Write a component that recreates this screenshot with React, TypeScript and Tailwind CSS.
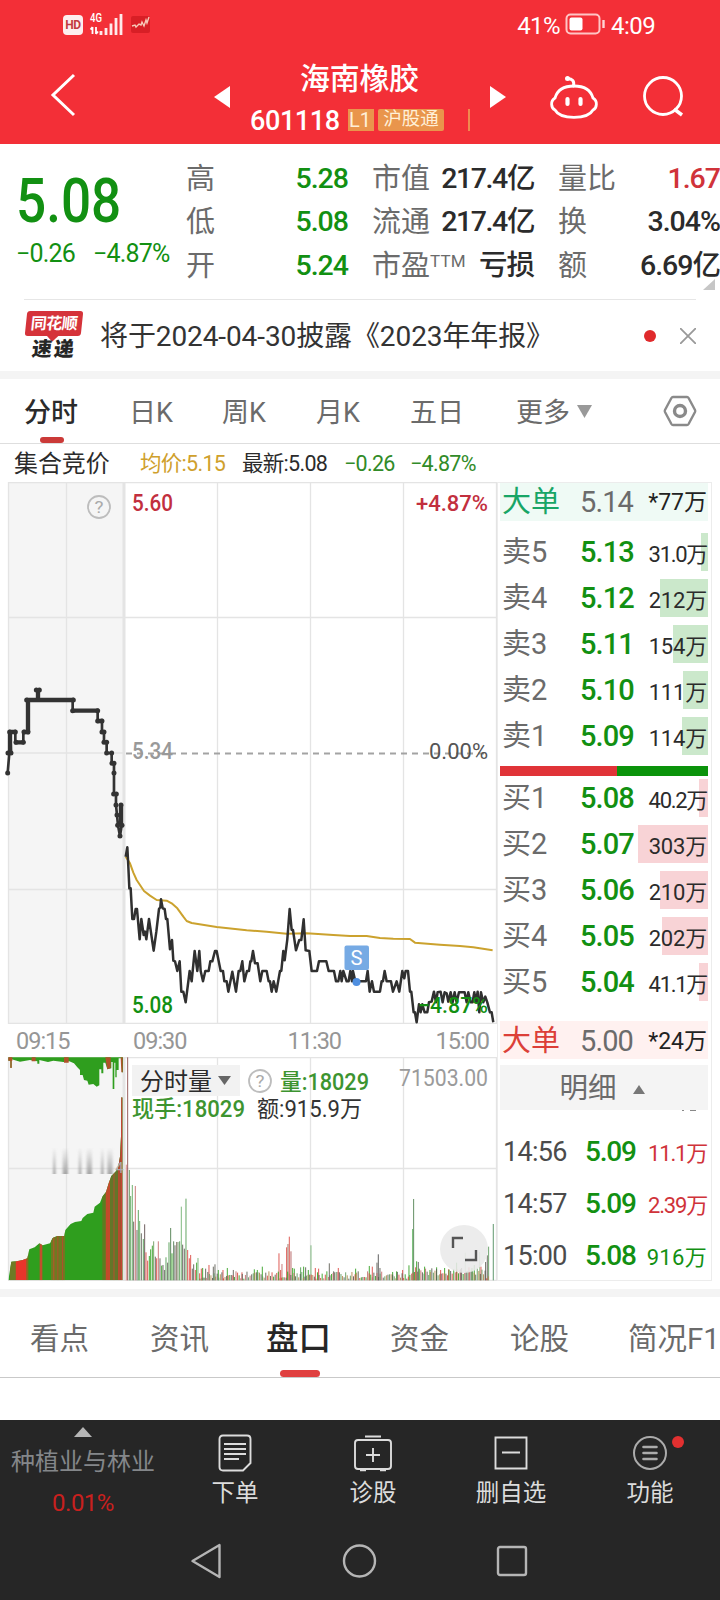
import React from "react";

type Bar = [x: number, top: number, color: string];

const G = "#2f9e1e";
const R = "#d9453f";
const K = "#5b5b52";

const quotes = [
  [["高", "5.28", "g"], ["市值", "217.4亿", "k"], ["量比", "1.67", "r"]],
  [["低", "5.08", "g"], ["流通", "217.4亿", "k"], ["换", "3.04%", "k"]],
  [["开", "5.24", "g"], ["市盈", "亏损", "k"], ["额", "6.69亿", "k"]],
];

const sells = [
  ["卖5", "5.13", "31.0万", 7],
  ["卖4", "5.12", "212万", 48],
  ["卖3", "5.11", "154万", 35],
  ["卖2", "5.10", "111万", 25],
  ["卖1", "5.09", "114万", 26],
] as const;

const buys = [
  ["买1", "5.08", "40.2万", 9],
  ["买2", "5.07", "303万", 70],
  ["买3", "5.06", "210万", 48],
  ["买4", "5.05", "202万", 46],
  ["买5", "5.04", "41.1万", 9],
] as const;

const trades = [
  ["14:56", "5.09", "11.1万", "r"],
  ["14:57", "5.09", "2.39万", "r"],
  ["15:00", "5.08", "916万", "g"],
] as const;

const tone: Record<string, string> = {
  g: "text-[#129012]",
  r: "text-[#d0333a]",
  k: "text-[#2b2b2b]",
};

const priceLine =
  "17,110 22,82 25,140 28,205 32,205 37,297 42,297 47,267 51,267 59,358 64,297 71,345 75,335 79,358 87,297 101,392 109,335 117,267 121,262 123,238 128,265 134,267 138,297 142,297 150,388 156,360 160,422 165,424 172,453 179,424 184,515 190,515 197,547 209,453 215,484 224,393 232,453 238,393 242,453 249,484 256,453 266,453 271,424 277,424 285,393 290,393 302,453 309,453 313,484 320,484 325,515 337,455 348,515 356,453 361,453 367,424 373,484 381,453 387,453 391,424 394,424 399,393 405,430 413,430 421,484 427,453 440,453 446,484 450,484 455,515 461,484 469,515 480,453 484,453 490,393 494,421 502,358 509,267 515,330 519,330 528,391 538,360 544,360 551,298 557,391 568,393 575,453 591,453 597,424 619,424 626,453 642,453 648,484 655,484 661,453 665,484 670,453 680,484 686,484 691,453 696,484 699,453 706,484 738,484 743,453 749,515 756,484 762,515 780,515 785,484 789,484 794,453 800,484 813,484 819,515 830,484 838,515 847,453 853,475 857,453 864,453 870,515 874,515 881,577 885,577 890,607 897,553 902,577 907,553 914,577 922,577 927,547 935,545 942,515 948,547 953,517 962,515 968,547 974,517 980,520 985,545 992,517 998,547 1004,517 1010,547 1017,517 1034,517 1040,547 1045,517 1052,547 1058,547 1063,517 1068,547 1073,515 1078,577 1083,517 1090,547 1096,530 1102,547 1110,577 1115,577 1120,607";
const avgLine =
  "17,110 30,130 40,158 50,180 72,213 90,227 110,240 140,242 155,250 172,265 190,290 200,303 215,309 290,321 380,331 440,335 500,341 560,340 640,345 690,348 740,348 780,354 820,356 870,357 885,368 960,374 1020,378 1060,382 1118,391";
const auctionLine =
  "23,909 28,849 33,849 31,786 46,786 46,817 70,817 70,786 84,786 84,690 114,690 114,660 114,690 218,690 218,722 293,722 293,753 306,753 306,786 312,786 312,817 320,817 320,849 335,849 335,880 342,880 342,972 348,972 348,1005 351,1035 354,1066 360,1098 365,1066 363,1005";
const auctionDots = [
  [23, 909], [24, 849], [33, 849], [29, 786], [46, 786], [48, 817], [70, 817], [72, 786], [84, 786], [80, 690],
  [220, 690], [109, 660], [118, 660], [218, 722], [293, 722], [293, 753], [306, 753], [306, 786], [312, 786],
  [312, 817], [320, 817], [320, 849], [335, 849], [336, 880], [342, 880], [342, 909], [341, 972], [349, 972],
  [348, 1005], [363, 1005], [351, 1035], [353, 1066], [366, 1066], [360, 1098],
];

const peaks: Bar[] = [
  [379, 374, "#e08080"], [383, 52, "#8a4a4a"], [388, 390, "#4d8c4d"], [392, 468, "#58a058"], [397, 435, "#5fa85f"],
  [401, 545, K], [406, 438, "#c46a6a"], [411, 570, K], [415, 510, "#4f9a4f"], [419, 543, "#5fa85f"], [424, 580, K],
  [430, 597, "#4f9a4f"], [434, 553, "#5b4a4a"], [438, 637, R], [443, 662, R], [448, 648, G], [452, 628, G],
  [457, 617, G], [461, 604, "#6a9a5a"], [466, 650, K], [470, 655, R], [475, 604, "#c46a6a"], [480, 655, K],
  [485, 677, G], [489, 675, K], [494, 690, K], [498, 652, "#4f9a4f"], [503, 668, K], [507, 607, "#4f9a4f"],
  [512, 564, "#4a7a4a"], [516, 640, G], [521, 604, "#4f7a4f"], [525, 616, K], [530, 606, "#7a6a5a"],
  [534, 606, "#6f8a5f"], [539, 604, "#4f9a4f"], [544, 500, "#6fb06f"], [548, 614, K], [553, 626, K],
  [558, 476, "#4f9a4f"], [563, 630, R], [568, 655, R], [572, 645, R], [577, 686, K], [581, 673, K], [586, 690, R],
  [590, 668, G], [594, 654, "#6fb06f"], [599, 700, R], [604, 686, R], [608, 684, G], [617, 686, K], [627, 675, R],
  [640, 680, K], [645, 673, K], [655, 690, G], [669, 690, R], [682, 684, G], [700, 690, K], [726, 697, R],
  [763, 688, G], [772, 690, G],
  [787, 680, G], [837, 640, R], [842, 690, R], [846, 672, "#c46a6a"], [860, 622, R], [864, 612, "#9a6a5a"],
  [868, 590, R], [873, 634, "#b05a5a"], [878, 684, G], [883, 686, G], [902, 682, "#4f9a4f"], [911, 680, G],
  [917, 682, K], [925, 690, G], [933, 616, "#6fb06f"], [946, 684, R], [956, 686, R], [988, 670, K], [1001, 694, K],
  [1015, 684, R], [1067, 686, G], [1108, 678, G], [1117, 680, R], [1131, 668, K], [1135, 643, "#4a4a4a"],
  [1140, 684, K], [1178, 696, G], [1190, 694, G], [1208, 690, R], [1227, 676, G], [1238, 567, "#58b058"],
  [1241, 477, "#4f7f4f"], [1247, 682, R], [1250, 664, G], [1255, 666, K], [1274, 680, G], [1290, 690, G],
  [1310, 682, G], [1322, 690, R], [1334, 684, G], [1346, 688, R], [1370, 668, G], [1382, 688, K], [1396, 638, "#a9c9a0"],
  [1407, 682, R], [1416, 684, G], [1423, 675, G], [1439, 636, "#9fc090"], [1443, 680, R], [1457, 666, K],
  [1462, 646, K], [1466, 620, "#5f9a5f"], [1480, 552, "#4a8a5a"],
];

const noise: Bar[] = Array.from({ length: 185 }, (_, i) => {
  const x = 600 + i * 4.7;
  const h = 5 + ((i * 37 + ((i * i) % 17) * 11) % 23);
  const end = x > 1255 && x < 1460 ? 10 : 0;
  return [x, 721 - h - end, [G, R, K, "#b0884a", "#5f9a5f", K, "#c46a6a"][(i * 5 + (i % 4)) % 7]];
});

const label = { fontFamily: "Roboto, 'Noto Sans CJK SC', sans-serif" };

function ChartText({
  x, y, w, size, fill, weight = 400, children,
}: { x: number; y: number; w: number; size: number; fill: string; weight?: number; children: string }) {
  return (
    <text x={x} y={y} fontSize={size} fill={fill} fontWeight={weight} textLength={w} lengthAdjust="spacingAndGlyphs" style={label}>
      {children}
    </text>
  );
}

function StatusBar() {
  return (
    <div className="flex h-12 items-center pl-[63px] pr-[63px] text-white">
      <div className="mt-px flex h-[20px] w-5 items-center justify-center rounded-[4px] bg-[#fdeeee] text-[12px] font-bold tracking-[-0.5px] text-[#c23a40]">HD</div>
      <svg className="ml-1.5" width="36" height="32" viewBox="0 0 36 32">
        <text x="1" y="14" fontSize="13" fontWeight="500" fill="#fff" textLength="12" lengthAdjust="spacingAndGlyphs" style={label}>4G</text>
        <g stroke="#fff" strokeWidth="2" fill="none">
          <path d="M3.500 26V19M1.500 21.500L3.500 19M7 19v7M9 23.500L7 26" strokeWidth="1.800" />
          <path d="M12 27v-4M17 27v-7M22 27V15.500M27 27V10M32 27V6" strokeWidth="2.800" opacity=".9" />
        </g>
      </svg>
      <svg className="ml-[5px]" width="22" height="20" viewBox="0 0 22 20">
        <rect x="1" y="2" width="19" height="17" rx="2" fill="#d81f26" />
        <path d="M2 12l3-1 1 2 3-3 2 1 1-3 2 4 2-6 1 3 2-6" fill="none" stroke="#f7c9b8" strokeWidth="1.400" />
      </svg>
      <div className="ml-auto pt-[3px] text-[24px] tracking-[-0.6px]">41%</div>
      <svg className="ml-[5px]" width="42" height="24" viewBox="0 0 42 24">
        <rect x="1.500" y="2.500" width="33" height="19" rx="4" fill="none" stroke="#ffc5c5" strokeWidth="2" />
        <rect x="4.500" y="5.500" width="13" height="13" rx="2" fill="#fff" />
        <path d="M38.500 8v8" stroke="#ffd5d5" strokeWidth="2.400" />
      </svg>
      <div className="ml-1 w-[46px] pt-[3px] text-[24px] tracking-[-0.5px]">4:09</div>
    </div>
  );
}

function TitleBar() {
  return (
    <div className="flex h-24 items-center pb-[3px] text-white">
      <svg className="ml-[50px]" width="26" height="44" viewBox="0 0 26 44">
        <path d="M24 2L3 22l21 20" fill="none" stroke="#fff" strokeWidth="3" />
      </svg>
      <svg className="mt-1 ml-[138px]" width="16" height="22" viewBox="0 0 16 22"><path d="M16 0v22L0 11z" fill="#fff" /></svg>
      <div className="ml-5 flex w-[220px] flex-col items-start pt-[11px]">
        <div className="ml-[50px] text-[30px] leading-[40px] font-medium tracking-[-0.3px]">海南橡胶</div>
        <div className="flex h-[42px] w-full items-center">
          <div className="w-[98px] pt-0.5 text-[27px] font-medium tracking-[-0.4px]">601118</div>
          <div className="flex h-[22px] w-[26px] items-center bg-[#e9954c] pl-px text-[20px] text-[#fff0d8]">L1</div>
          <div className="ml-1 flex h-[22px] w-[66px] items-center justify-center rounded-[2px] bg-[#e9954c] text-[18.500px] text-[#fff0d8]">沪股通</div>
          <div className="ml-6 h-[22px] w-0.5 bg-[#f08a4e]" />
        </div>
      </div>
      <svg className="mt-1 ml-5" width="16" height="22" viewBox="0 0 16 22"><path d="M0 0v22l16-11z" fill="#fff" /></svg>
      <svg className="mt-1 ml-[43px]" width="50" height="44" viewBox="0 0 50 44">
        <g fill="none" stroke="#fff" strokeWidth="2.800" strokeLinecap="round">
          <path d="M25 11C14 11 8 16 6 23C1 26 2 33 6 35C9 40.500 15 42.300 25 42.300S41 40.500 44 35C48 33 49 26 44 23C42 16 36 11 25 11z" />
          <path d="M24.500 11C25.500 6 23.500 4 18.500 3.500" strokeWidth="3" />
          <path d="M18.500 24v5M31.500 24v5" strokeWidth="4.200" />
        </g>
        <circle cx="18.500" cy="3.500" r="2.500" fill="#fff" />
      </svg>
      <svg className="mt-1 ml-[43px]" width="44" height="44" viewBox="0 0 44 44">
        <circle cx="21" cy="21" r="18.500" fill="none" stroke="#fff" strokeWidth="2.800" />
        <path d="M32 34l8 6" stroke="#fff" strokeWidth="3.500" />
      </svg>
    </div>
  );
}

function Quotes() {
  return (
    <section className="flex h-[155px]">
      <div className="w-[187px] pl-4 pt-[23px] text-[#129012]">
        <div className="h-[69px] origin-left scale-x-[0.87] text-[61px] leading-[68px] font-medium">5.08</div>
        <div className="flex h-9 items-center gap-[18px] whitespace-nowrap text-[25px] tracking-[-0.8px]">
          <span>−0.26</span>
          <span>−4.87%</span>
        </div>
      </div>
      <div className="flex flex-1 flex-col pt-[13px]">
        {quotes.map((row, i) => (
          <div key={i} className="flex h-[43.5px] items-center">
            {row.map(([name, value, t], j) => (
              <div key={name} className={"flex w-[161px] items-center justify-between whitespace-nowrap " + (j < 2 ? "mr-[25px]" : "")}>
                <span className="-ml-px flex items-start text-[29px] leading-10 text-[#6b6b6b]">
                  {name}
                  {name === "市盈" && <span className="text-[17px] leading-[30px] tracking-[0.2px]">TTM</span>}
                </span>
                <span className={"text-[28.500px] leading-10 font-medium " + tone[t] + (j === 1 && i < 2 ? " tracking-[-1.400px]" : " tracking-[-1px]")}>{value}</span>
              </div>
            ))}
          </div>
        ))}
        <svg className="-mt-[9px] ml-[516px] shrink-0" width="12" height="11" viewBox="0 0 12 11"><path d="M12 0v11H0z" fill="#c6c6c6" /></svg>
      </div>
    </section>
  );
}

function Notice() {
  return (
    <section className="mx-6 flex h-[72px] items-center border-t border-[#e6e6e6]">
      <div className="flex w-[60px] flex-col items-center">
        <div className="relative flex h-[25px] w-[56px] -skew-x-6 items-center justify-center rounded-[3px] bg-[#d5333a] text-[16px] leading-none font-bold tracking-[-0.5px] text-white">
          同花顺
          <div className="absolute -bottom-1 left-[24px] h-2 w-2 rotate-45 bg-[#d5333a]" />
        </div>
        <div className="h-6 -skew-x-6 text-[20px] leading-[27px] font-black tracking-[2px] text-[#262626]">速递</div>
      </div>
      <div className="ml-4 pt-[3px] text-[28px] whitespace-nowrap text-[#333] tracking-[-0.1px]">将于2024-04-30披露《2023年年报》</div>
      <div className="ml-auto h-3 w-3 rounded-full bg-[#e02a2c]" />
      <svg className="ml-6" width="16" height="16" viewBox="0 0 16 16"><path d="M0 0l16 16M16 0L0 16" stroke="#999" strokeWidth="1.800" /></svg>
    </section>
  );
}

function PeriodTabs() {
  return (
    <nav className="flex h-[65px] items-center border-b border-[#dedede] text-[27px] text-[#6b6b6b]">
      <div className="relative ml-[24px] w-[105px] pt-1 font-medium text-[#2b2b2b]">
        分时
        <div className="absolute -bottom-2.5 left-[16px] h-1.5 w-6 rounded-full bg-[#cb3a38]" />
      </div>
      <div className="w-[93px] pt-1">日K</div>
      <div className="w-[94px] pt-1">周K</div>
      <div className="w-[94px] pt-1">月K</div>
      <div className="w-[106px] pt-1">五日</div>
      <div className="w-[61px] pt-1">更多</div>
      <svg width="15" height="13" viewBox="0 0 15 13"><path d="M0 0h15L7.500 13z" fill="#999" /></svg>
      <svg className="ml-[71px]" width="34" height="32" viewBox="0 0 34 32">
        <g fill="none" stroke="#8a8a8a" strokeWidth="2.400">
          <path d="M10 2h14q1 0 1.600 1L32 15q.5 1 0 2l-6.400 12q-.6 1-1.600 1H10q-1 0-1.600-1L2 17q-.5-1 0-2L8.400 3Q9 2 10 2z" />
          <circle cx="17" cy="16" r="5.500" strokeWidth="3.400" />
        </g>
      </svg>
    </nav>
  );
}

function PriceChart() {
  return (
    <svg className="block" width="497" height="542" viewBox="0 482 497 542">
      <rect x="8" y="482" width="116" height="542" fill="#f5f5f5" />
      <g stroke="#e4e4e4" strokeWidth="1.300">
        <path d="M8 482.500H497M8 617.500H497M8 889.500H497M8 1023.500H497M8.500 482V1024M66.500 482V1024M217.500 482V1024M310.500 482V1024M403.500 482V1024M496.500 482V1024M8 753H124" />
        <path d="M124 482V1024" strokeWidth="3" />
      </g>
      <path d="M126 753.500H487" stroke="#a3a3a3" strokeWidth="2" strokeDasharray="6 5" />
      <circle cx="99" cy="507" r="11" fill="none" stroke="#bdbdbd" strokeWidth="1.800" />
      <ChartText x={94.5} y={513} w={9} size={17} fill="#aaa">?</ChartText>
      <ChartText x={132} y={511} w={41} size={23.5} fill="#c22f3e" weight={500}>5.60</ChartText>
      <ChartText x={416} y={511} w={72} size={22.5} fill="#c22f3e" weight={500}>+4.87%</ChartText>
      <ChartText x={132} y={759} w={41} size={23.5} fill="#999" weight={500}>5.34</ChartText>
      <ChartText x={429} y={759} w={59} size={22.5} fill="#555">0.00%</ChartText>
      <g transform="translate(0 470) scale(.3333)" fill="#333">
        <polyline points={auctionLine} fill="none" stroke="#333" strokeWidth="8" />
        <path d="M84 690V786M30 786V849M80 690H222M114 660V690M218 722H296M27 786H48M44 817H72M70 786H88M363 1005V1066M292 753H308" stroke="#333" strokeWidth="13" />
        {auctionDots.map(([x, y], i) => <circle key={i} cx={x} cy={y} r="7.500" />)}
      </g>
      <g transform="translate(120 820) scale(.3333)" fill="none" strokeLinejoin="round">
        <polyline points={avgLine} stroke="#cba22e" strokeWidth="6" />
        <polyline points={priceLine} stroke="#303030" strokeWidth="7.500" />
      </g>
      <rect x="344.500" y="945.500" width="24.500" height="24.500" rx="2" fill="#76aae4" />
      <ChartText x={350.500} y={965} w={12} size={21} fill="#fff">S</ChartText>
      <circle cx="356.500" cy="982" r="4" fill="#4f8fe0" />
      <ChartText x={132} y={1013} w={41} size={23.5} fill="#129012" weight={500}>5.08</ChartText>
      <ChartText x={418} y={1013} w={70} size={22.5} fill="#129012" weight={500}>−4.87%</ChartText>
    </svg>
  );
}

const stripes = [
  [30, 17, "#6f7a25"], [47, 33, "#e8352b"], [80, 5, "#8a6a20"], [119, 8, "#c0502c"], [153, 42, "#6e7a22"], [160, 3, "#c0502c"],
  [172, 3, "#b0502c"], [186, 3, "#b0502c"], [307, 10, "#5c7c20"], [317, 14, "#c24a2a"], [331, 23, "#64752a"],
  [340, 4, "#a05a2c"], [354, 15, "#9b5528"],
] as const;

function VolumeChart() {
  return (
    <svg className="block" width="497" height="224" viewBox="0 1057 497 224">
      <rect x="8" y="1057" width="116" height="223" fill="#f5f5f5" />
      <g stroke="#e4e4e4" strokeWidth="1.300">
        <path d="M8 1057.500H497M8 1168.500H497M8 1280.500H497M8.500 1057V1280M66.500 1057V1280M217.500 1057V1280M310.500 1057V1280M403.500 1057V1280M496.500 1057V1280" />
        <path d="M124 1057V1280" strokeWidth="3" />
      </g>
      <defs>
        <clipPath id="auction">
          <path d="M25 721L34 665L50 664L68 660L82 655L88 628L104 622L118 610L128 616L150 610L158 594L172 588L193 588L196 570L212 552L225 546L244 543L248 534L262 522L280 518L284 500L300 488L307 470L318 456L326 430L334 408L346 396L354 385L360 350L363 290L364 172H368V721z" />
        </clipPath>
        <linearGradient id="fade" x1="0" y1="0" x2="0" y2="1">
          <stop offset="0" stopColor="#aaa" stopOpacity="0" />
          <stop offset="1" stopColor="#a2a2a2" stopOpacity=".95" />
        </linearGradient>
        <filter id="soft" x="-50%" y="0" width="200%" height="100%"><feGaussianBlur stdDeviation="2.500 0" /></filter>
      </defs>
      <g transform="translate(0 1040) scale(.3333)">
        <path d="M25 52H369V95L366 98V55H356V90H350V112H346V68H343V147H338V66H334V85L322 88L316 68H310V100H304V88H298V136L290 140L280 132L266 134L262 122L252 120L248 105H240V90L232 82L222 70L208 64L190 66L160 62L144 66L118 60V71H112V64L90 60L60 65L35 58V83H31V62H25z" fill={G} />
        <path d="M25 52h12v10h-2v22h-4V62h-6zM316 52h16v32l-10 4zM95 52h12v12H95zM192 52h14v16h-14zM362 52h6v45h-4z" fill="#b0522a" />
        <g clipPath="url(#auction)">
          <rect x="25" y="100" width="345" height="621" fill={G} />
          {stripes.map(([x, w, c], i) => <rect key={i} x={x} y="160" width={w} height="561" fill={c} />)}
          <path d="M364 170V721M357 330V721" stroke="#d0413a" strokeWidth="3" />
        </g>
        <g filter="url(#soft)">
          {[163, 196, 240, 268, 307, 330].map((x, i) => (
            <rect key={x} x={x - (i % 2 ? 8 : 4)} y="322" width={i % 2 ? 16 : 8} height="80" fill="url(#fade)" />
          ))}
        </g>
        <text x="346" y="400" fontSize="44" fill="#aaa" style={label}>4</text>
        {peaks.concat(noise).map(([x, top, c], i) => (
          <rect key={i} x={x - 1.5} y={top} width="3" height={721 - top} fill={c} opacity=".88" />
        ))}
      </g>
      <rect x="132" y="1065" width="108" height="31" fill="#f2f2f2" />
      <ChartText x={140} y={1090} w={72} size={24} fill="#2b2b2b">分时量</ChartText>
      <path d="M218 1076h13l-6.500 9z" fill="#666" />
      <circle cx="260" cy="1081" r="11" fill="none" stroke="#bdbdbd" strokeWidth="1.800" />
      <ChartText x={255.500} y={1087} w={9} size={17} fill="#aaa">?</ChartText>
      <ChartText x={280} y={1090} w={89} size={23} fill="#3d9430" weight={500}>量:18029</ChartText>
      <ChartText x={399} y={1086} w={89} size={23.5} fill="#9b9b9b">71503.00</ChartText>
      <ChartText x={132} y={1117} w={113} size={23} fill="#3d9430" weight={500}>现手:18029</ChartText>
      <ChartText x={257} y={1117} w={105} size={23} fill="#333">额:915.9万</ChartText>
      <circle cx="464" cy="1249" r="24" fill="#e9e9e9" opacity=".88" />
      <path d="M453 1248v-10h10M465 1260h11v-10" fill="none" stroke="#555" strokeWidth="2.400" />
    </svg>
  );
}

function DepthRow({ name, price, volume, width, buy }: { name: string; price: string; volume: string; width: number; buy?: boolean }) {
  return (
    <div className="relative flex h-[46px] items-start">
      <div className={"absolute right-0 top-0 h-[38px] " + (buy ? "bg-[#f8d3d6]" : "bg-[#cbe8cb]")} style={{ width }} />
      <div className="relative flex h-10 w-full items-center whitespace-nowrap">
        <span className="w-[80px] pl-0.5 text-[29px] text-[#6b6b6b]">{name}</span>
        <span className="text-[29px] font-medium tracking-[-0.9px] text-[#129012]">{price}</span>
        <span className={"ml-auto pt-[3px] pr-px text-[22px] text-[#2b2b2b] " + (volume.includes(".") ? "tracking-[-1.300px]" : "tracking-[-0.2px]")}>{volume}</span>
      </div>
    </div>
  );
}

function BigOrder({ price, volume, buy }: { price: string; volume: string; buy?: boolean }) {
  return (
    <div className={"flex h-[38px] items-center whitespace-nowrap " + (buy ? "bg-[#fff1f0] pt-[3px]" : "bg-[#effaf5] pt-px")}>
      <span className={"w-[80px] pl-0.5 text-[29px] " + (buy ? "text-[#dc3f38]" : "text-[#17a566]")}>大单</span>
      <span className="text-[29px] tracking-[-0.9px] text-[#6b6b6b]">{price}</span>
      <span className="ml-auto pr-px pt-0.5 text-[23px] text-[#222]">{volume}</span>
    </div>
  );
}

function OrderBook() {
  return (
    <aside className="h-[799px] w-[215px] border border-[#ececec] pl-0.5 pr-[3px]">
      <BigOrder price="5.14" volume="*77万" />
      <div className="h-[12px]" />
      {sells.map(([n, p, v, w]) => <DepthRow key={n} name={n} price={p} volume={v} width={w} />)}
      <div className="mt-[3px] flex h-2.5">
        <div className="w-[117px] bg-[#e03338]" />
        <div className="flex-1 bg-[#0b930b]" />
      </div>
      <div className="h-[3px]" />
      {buys.map(([n, p, v, w]) => <DepthRow key={n} name={n} price={p} volume={v} width={w} buy />)}
      <div className="h-3" />
      <BigOrder price="5.00" volume="*24万" buy />
      <div className="mt-1.5 flex h-[45px] items-center justify-center gap-4 bg-[#f4f4f4] pt-[3px] pr-1 text-[28.500px] text-[#6b6b6b]">
        明细
        <svg width="12" height="9" viewBox="0 0 12 9"><path d="M6 0l6 9H0z" fill="#777" /></svg>
      </div>
      <div className="flex h-[16px] items-start justify-end gap-1.5 pr-3">
        <div className="h-px w-0.5 bg-[#888]" />
        <div className="h-px w-1.5 bg-[#888]" />
      </div>
      {trades.map(([t, p, v, c]) => (
        <div key={t} className="flex h-[52px] items-center pl-[3px] pr-px whitespace-nowrap">
          <span className="w-[82px] text-[27px] tracking-[-0.7px] text-[#4b4b4b]">{t}</span>
          <span className="text-[28px] font-medium tracking-[-1.200px] text-[#129012]">{p}</span>
          <span className={"ml-auto pt-0.5 text-[22px] " + tone[c] + (v.includes(".") ? " tracking-[-1.200px]" : " tracking-[0.3px]")}>{v}</span>
        </div>
      ))}
    </aside>
  );
}

function BottomItem({ name, className, children }: { name: string; className: string; children: React.ReactNode }) {
  return (
    <div className={"flex flex-col items-center text-[23.500px] text-[#dcdcdc] " + className}>
      {children}
      <div className="-mt-px flex h-[34px] items-center">{name}</div>
    </div>
  );
}

export default function App() {
  return (
    <main className="h-[1600px] w-[720px] overflow-hidden bg-white font-[Roboto,'Noto_Sans_CJK_SC',sans-serif]">
      <header className="h-36 bg-[#f32f37]">
        <StatusBar />
        <TitleBar />
      </header>
      <Quotes />
      <Notice />
      <div className="h-2 bg-[#f4f4f4]" />
      <PeriodTabs />

      <div className="flex h-[38px] items-center pt-0.5 whitespace-nowrap text-[21.500px] tracking-[-0.7px]">
        <span className="ml-[14px] w-[126px] text-[24px] tracking-[-0.1px] text-[#2b2b2b]">集合竞价</span>
        <span className="w-[102px] text-[#cfa02c]">均价:5.15</span>
        <span className="w-[102px] text-[#2b2b2b]">最新:5.08</span>
        <span className="w-[66px] text-[#318b28]">−0.26</span>
        <span className="text-[#318b28]">−4.87%</span>
      </div>

      <div className="flex h-[799px]">
        <div className="w-[497px]">
          <PriceChart />
          <div className="flex h-[33px] items-center justify-between pl-4 pr-[8px] pt-[3px] text-[23.500px] tracking-[-1px] text-[#969696]">
            <span className="w-[117px]">09:15</span>
            <span>09:30</span>
            <span className="ml-[101px] mr-auto">11:30</span>
            <span>15:00</span>
          </div>
          <VolumeChart />
        </div>
        <OrderBook />
      </div>

      <div className="mt-2 h-2 bg-[#f4f4f4]" />
      <nav className="flex h-[81px] items-center border-b border-[#c9c9c9] pt-[5px] text-[29.500px] whitespace-nowrap text-[#6b6b6b]">
        <div className="ml-[30px] w-[120px]">看点</div>
        <div className="w-[116px]">资讯</div>
        <div className="relative w-[124px] text-[32.500px] font-medium text-[#262626]">
          盘口
          <div className="absolute -bottom-[13px] left-[14px] h-[7px] w-10 rounded-full bg-[#e04040]" />
        </div>
        <div className="w-[120px]">资金</div>
        <div className="w-[118px]">论股</div>
        <div>简况F1</div>
      </nav>
      <div className="h-[42px]" />

      <footer className="h-[180px] bg-[#262626]">
        <div className="flex h-[106px]">
          <div className="flex w-[166px] flex-col items-center pt-[7px] text-[24px] whitespace-nowrap text-[#84878a]">
            <svg width="18" height="10" viewBox="0 0 18 10"><path d="M9 0l9 10H0z" fill="#b5b5b5" /></svg>
            <div className="mt-[7px] flex h-[36px] items-center">种植业与林业</div>
            <div className="mt-[5px] flex h-9 items-center text-[24px] tracking-[-0.5px] text-[#c9201e]">0.01%</div>
          </div>
          <BottomItem name="下单" className="w-[138px] pt-[14px]">
            <svg className="mb-[6px]" width="34" height="38" viewBox="0 0 34 38">
              <path d="M5 1.500h24q3.500 0 3.500 3.500v24l-7.500 7.500H5q-3.500 0-3.500-3.500V5q0-3.500 3.500-3.500zM6 10h22M6 15h22M6 20h22M6 25h15" fill="none" stroke="#dcdcdc" strokeWidth="1.900" />
            </svg>
          </BottomItem>
          <BottomItem name="诊股" className="w-[138px] pt-[14px]">
            <svg className="mb-[6px]" width="40" height="38" viewBox="0 0 40 38">
              <path d="M5 6h30q3 0 3 3v23q0 3-3 3H5q-3 0-3-3V9q0-3 3-3zM12 2.500h16M20 14v14M13 21h14" fill="none" stroke="#dcdcdc" strokeWidth="1.900" />
              <path d="M7 35.800h6M27 35.800h6" stroke="#dcdcdc" strokeWidth="3" />
            </svg>
          </BottomItem>
          <BottomItem name="删自选" className="w-[138px] pt-[14px]">
            <svg className="mb-[6px]" width="34" height="38" viewBox="0 0 34 38">
              <path d="M1.500 3.500h31v31h-31zM8 18.500h18" fill="none" stroke="#dcdcdc" strokeWidth="1.900" />
            </svg>
          </BottomItem>
          <BottomItem name="功能" className="relative w-[140px] pt-[14px]">
            <svg className="mb-[6px]" width="36" height="38" viewBox="0 0 36 38">
              <circle cx="18" cy="19" r="16" fill="none" stroke="#ababab" strokeWidth="2" />
              <path d="M11.500 13h13M11.500 19h13M11.500 25h13" stroke="#ababab" strokeWidth="2.600" strokeLinecap="round" />
            </svg>
            <div className="absolute top-4 left-[92px] h-3 w-3 rounded-full bg-[#e23030]" />
          </BottomItem>
        </div>
        <div className="flex h-[70px] items-center justify-between pl-[190px] pr-[192px]">
          <svg width="32" height="38" viewBox="0 0 32 38"><path d="M29.500 3v32L2.500 19z" fill="none" stroke="#b5b5b5" strokeWidth="2.400" strokeLinejoin="round" /></svg>
          <svg width="36" height="36" viewBox="0 0 36 36"><circle cx="18.500" cy="18" r="15.500" fill="none" stroke="#b5b5b5" strokeWidth="2.400" /></svg>
          <svg width="32" height="32" viewBox="0 0 32 32"><rect x="2" y="2" width="28" height="28" rx="2" fill="none" stroke="#b5b5b5" strokeWidth="2.400" /></svg>
        </div>
      </footer>
    </main>
  );
}
